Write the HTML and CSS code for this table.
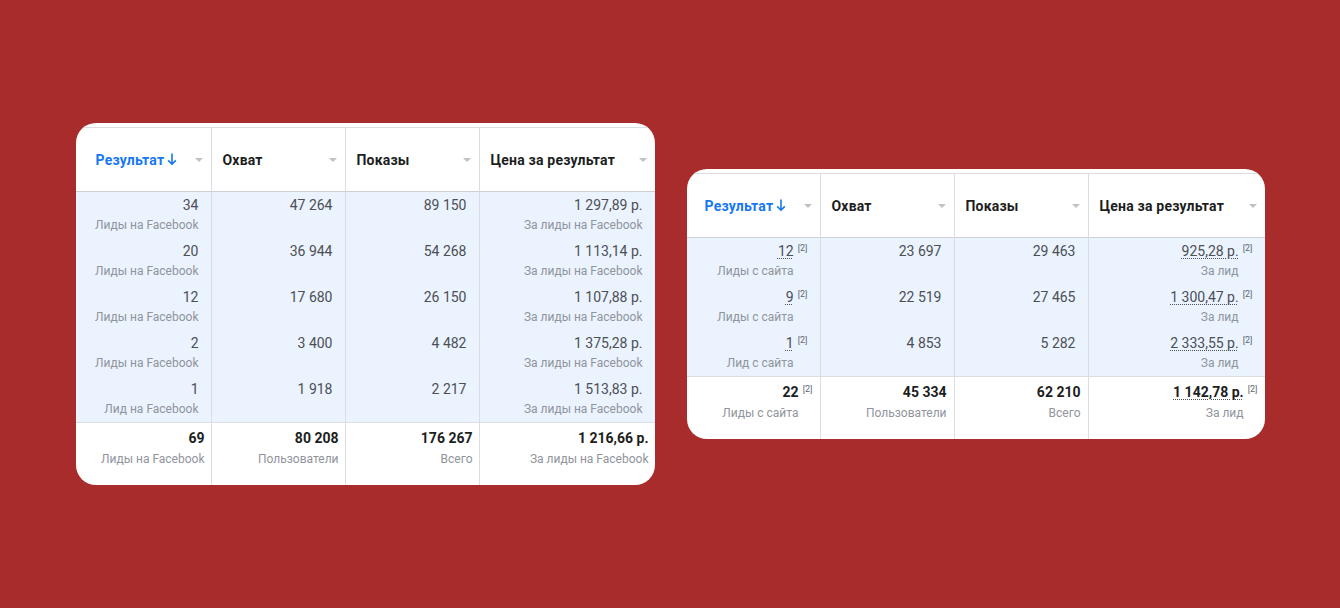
FILE: index.html
```html
<!DOCTYPE html>
<html lang="ru">
<head>
<meta charset="utf-8">
<title>Результаты</title>
<link rel="stylesheet" href="styles.css">
</head>
<body>
<div class="card card-a">
  <div class="grid">
    <div class="hd first"><span class="sorted">Результат<svg class="arrow" width="10" height="14" viewBox="0 0 10 14"><path d="M5 1.5V12.2M1.2 8.4L5 12.2L8.8 8.4" fill="none" stroke="#1877f2" stroke-width="1.6"/></svg></span><i class="tri"></i></div>
    <div class="hd"><span>Охват</span><i class="tri"></i></div>
    <div class="hd"><span>Показы</span><i class="tri"></i></div>
    <div class="hd"><span>Цена за результат</span><i class="tri"></i></div>

    <div class="td first"><div class="num">34</div><div class="lbl">Лиды на Facebook</div></div>
    <div class="td"><div class="num">47 264</div></div>
    <div class="td"><div class="num">89 150</div></div>
    <div class="td"><div class="num">1 297,89 р.</div><div class="lbl">За лиды на Facebook</div></div>

    <div class="td first"><div class="num">20</div><div class="lbl">Лиды на Facebook</div></div>
    <div class="td"><div class="num">36 944</div></div>
    <div class="td"><div class="num">54 268</div></div>
    <div class="td"><div class="num">1 113,14 р.</div><div class="lbl">За лиды на Facebook</div></div>

    <div class="td first"><div class="num">12</div><div class="lbl">Лиды на Facebook</div></div>
    <div class="td"><div class="num">17 680</div></div>
    <div class="td"><div class="num">26 150</div></div>
    <div class="td"><div class="num">1 107,88 р.</div><div class="lbl">За лиды на Facebook</div></div>

    <div class="td first"><div class="num">2</div><div class="lbl">Лиды на Facebook</div></div>
    <div class="td"><div class="num">3 400</div></div>
    <div class="td"><div class="num">4 482</div></div>
    <div class="td"><div class="num">1 375,28 р.</div><div class="lbl">За лиды на Facebook</div></div>

    <div class="td first"><div class="num">1</div><div class="lbl">Лид на Facebook</div></div>
    <div class="td"><div class="num">1 918</div></div>
    <div class="td"><div class="num">2 217</div></div>
    <div class="td"><div class="num">1 513,83 р.</div><div class="lbl">За лиды на Facebook</div></div>

    <div class="tt first"><div class="num">69</div><div class="lbl">Лиды на Facebook</div></div>
    <div class="tt"><div class="num">80 208</div><div class="lbl">Пользователи</div></div>
    <div class="tt"><div class="num">176 267</div><div class="lbl">Всего</div></div>
    <div class="tt"><div class="num">1 216,66 р.</div><div class="lbl">За лиды на Facebook</div></div>
  </div>
</div>

<div class="card card-b">
  <div class="grid">
    <div class="hd first"><span class="sorted">Результат<svg class="arrow" width="10" height="14" viewBox="0 0 10 14"><path d="M5 1.5V12.2M1.2 8.4L5 12.2L8.8 8.4" fill="none" stroke="#1877f2" stroke-width="1.6"/></svg></span><i class="tri"></i></div>
    <div class="hd"><span>Охват</span><i class="tri"></i></div>
    <div class="hd"><span>Показы</span><i class="tri"></i></div>
    <div class="hd"><span>Цена за результат</span><i class="tri"></i></div>

    <div class="td first"><div class="num"><span class="dot">12</span><sup class="ref">[2]</sup></div><div class="lbl pad">Лиды с сайта</div></div>
    <div class="td"><div class="num">23 697</div></div>
    <div class="td"><div class="num">29 463</div></div>
    <div class="td"><div class="num"><span class="dot">925,28 р.</span><sup class="ref">[2]</sup></div><div class="lbl pad">За лид</div></div>

    <div class="td first"><div class="num"><span class="dot">9</span><sup class="ref">[2]</sup></div><div class="lbl pad">Лиды с сайта</div></div>
    <div class="td"><div class="num">22 519</div></div>
    <div class="td"><div class="num">27 465</div></div>
    <div class="td"><div class="num"><span class="dot">1 300,47 р.</span><sup class="ref">[2]</sup></div><div class="lbl pad">За лид</div></div>

    <div class="td first"><div class="num"><span class="dot">1</span><sup class="ref">[2]</sup></div><div class="lbl pad">Лид с сайта</div></div>
    <div class="td"><div class="num">4 853</div></div>
    <div class="td"><div class="num">5 282</div></div>
    <div class="td"><div class="num"><span class="dot">2 333,55 р.</span><sup class="ref">[2]</sup></div><div class="lbl pad">За лид</div></div>

    <div class="tt first"><div class="num">22<sup class="ref">[2]</sup></div><div class="lbl pad">Лиды с сайта</div></div>
    <div class="tt"><div class="num">45 334</div><div class="lbl">Пользователи</div></div>
    <div class="tt"><div class="num">62 210</div><div class="lbl">Всего</div></div>
    <div class="tt"><div class="num"><span class="dot">1 142,78 р.</span><sup class="ref">[2]</sup></div><div class="lbl pad">За лид</div></div>
  </div>
</div>
</body>
</html>
```

FILE: styles.css
```css
* { box-sizing: border-box; }
html, body { margin: 0; padding: 0; }
body {
  background: #a92c2c;
  height: 608px;
  display: flex;
  align-items: center;
  justify-content: center;
  gap: 32px;
  font-family: Roboto, "Liberation Sans", Arial, sans-serif;
  color: #1c1e21;
}
.card {
  background: #fff;
  border-radius: 20px;
  overflow: hidden;
  padding-top: 4px;
}
.grid {
  display: grid;
  border-top: 1px solid #dadde1;
}
.card-a .grid {
  grid-template-columns: 135px 134px 134px 176px;
  grid-template-rows: 64px repeat(5, 46px) 63px;
}
.card-b .grid {
  grid-template-columns: 133px 134px 134px 177px;
  grid-template-rows: 64px repeat(3, 46px) 63px;
}

.hd, .td, .tt { border-left: 1px solid #dadde1; }
.first { border-left: 0; }

.hd {
  border-bottom: 1px solid #ccd0d5;
  display: flex;
  align-items: center;
  justify-content: space-between;
  padding: 0 8px 0 11px;
  font-size: 14px;
  font-weight: 700;
  letter-spacing: 0.2px;
  color: #1c1e21;
  white-space: nowrap;
}
.card-a .hd.first { padding-left: 20px; }
.card-b .hd.first { padding-left: 18px; }
.sorted { color: #1877f2; display: flex; align-items: center; }
.arrow { margin-left: 3px; margin-top: -1px; }
.tri {
  width: 0; height: 0;
  border-left: 4px solid transparent;
  border-right: 4px solid transparent;
  border-top: 4px solid #bec3c9;
  margin-top: 1px;
}

.td {
  background: #ebf3fe;
  padding: 5px 12px 0 8px;
  text-align: right;
  white-space: nowrap;
}
.tt {
  border-top: 1px solid #dadde1;
  padding: 7px 6px 0 6px;
  text-align: right;
  white-space: nowrap;
}
.card-b .tt { padding-right: 7px; }

.num {
  font-size: 14px;
  line-height: 16px;
  color: #4b4f56;
}
.tt .num { font-weight: 700; color: #1c1e21; }
.lbl {
  font-size: 12px;
  line-height: 16px;
  color: #90949c;
  margin-top: 4px;
}
.tt .lbl { margin-top: 5px; }
.lbl.pad { padding-right: 14px; }

.dot {
  text-decoration: underline dotted #4b4f56;
  text-decoration-thickness: 1px;
  text-underline-offset: 2px;
}
.ref {
  font-size: 9px;
  line-height: 9px;
  color: #606770;
  font-weight: 400;
  vertical-align: top;
  margin-left: 4px;
  position: relative;
  top: 1px;
}
```
